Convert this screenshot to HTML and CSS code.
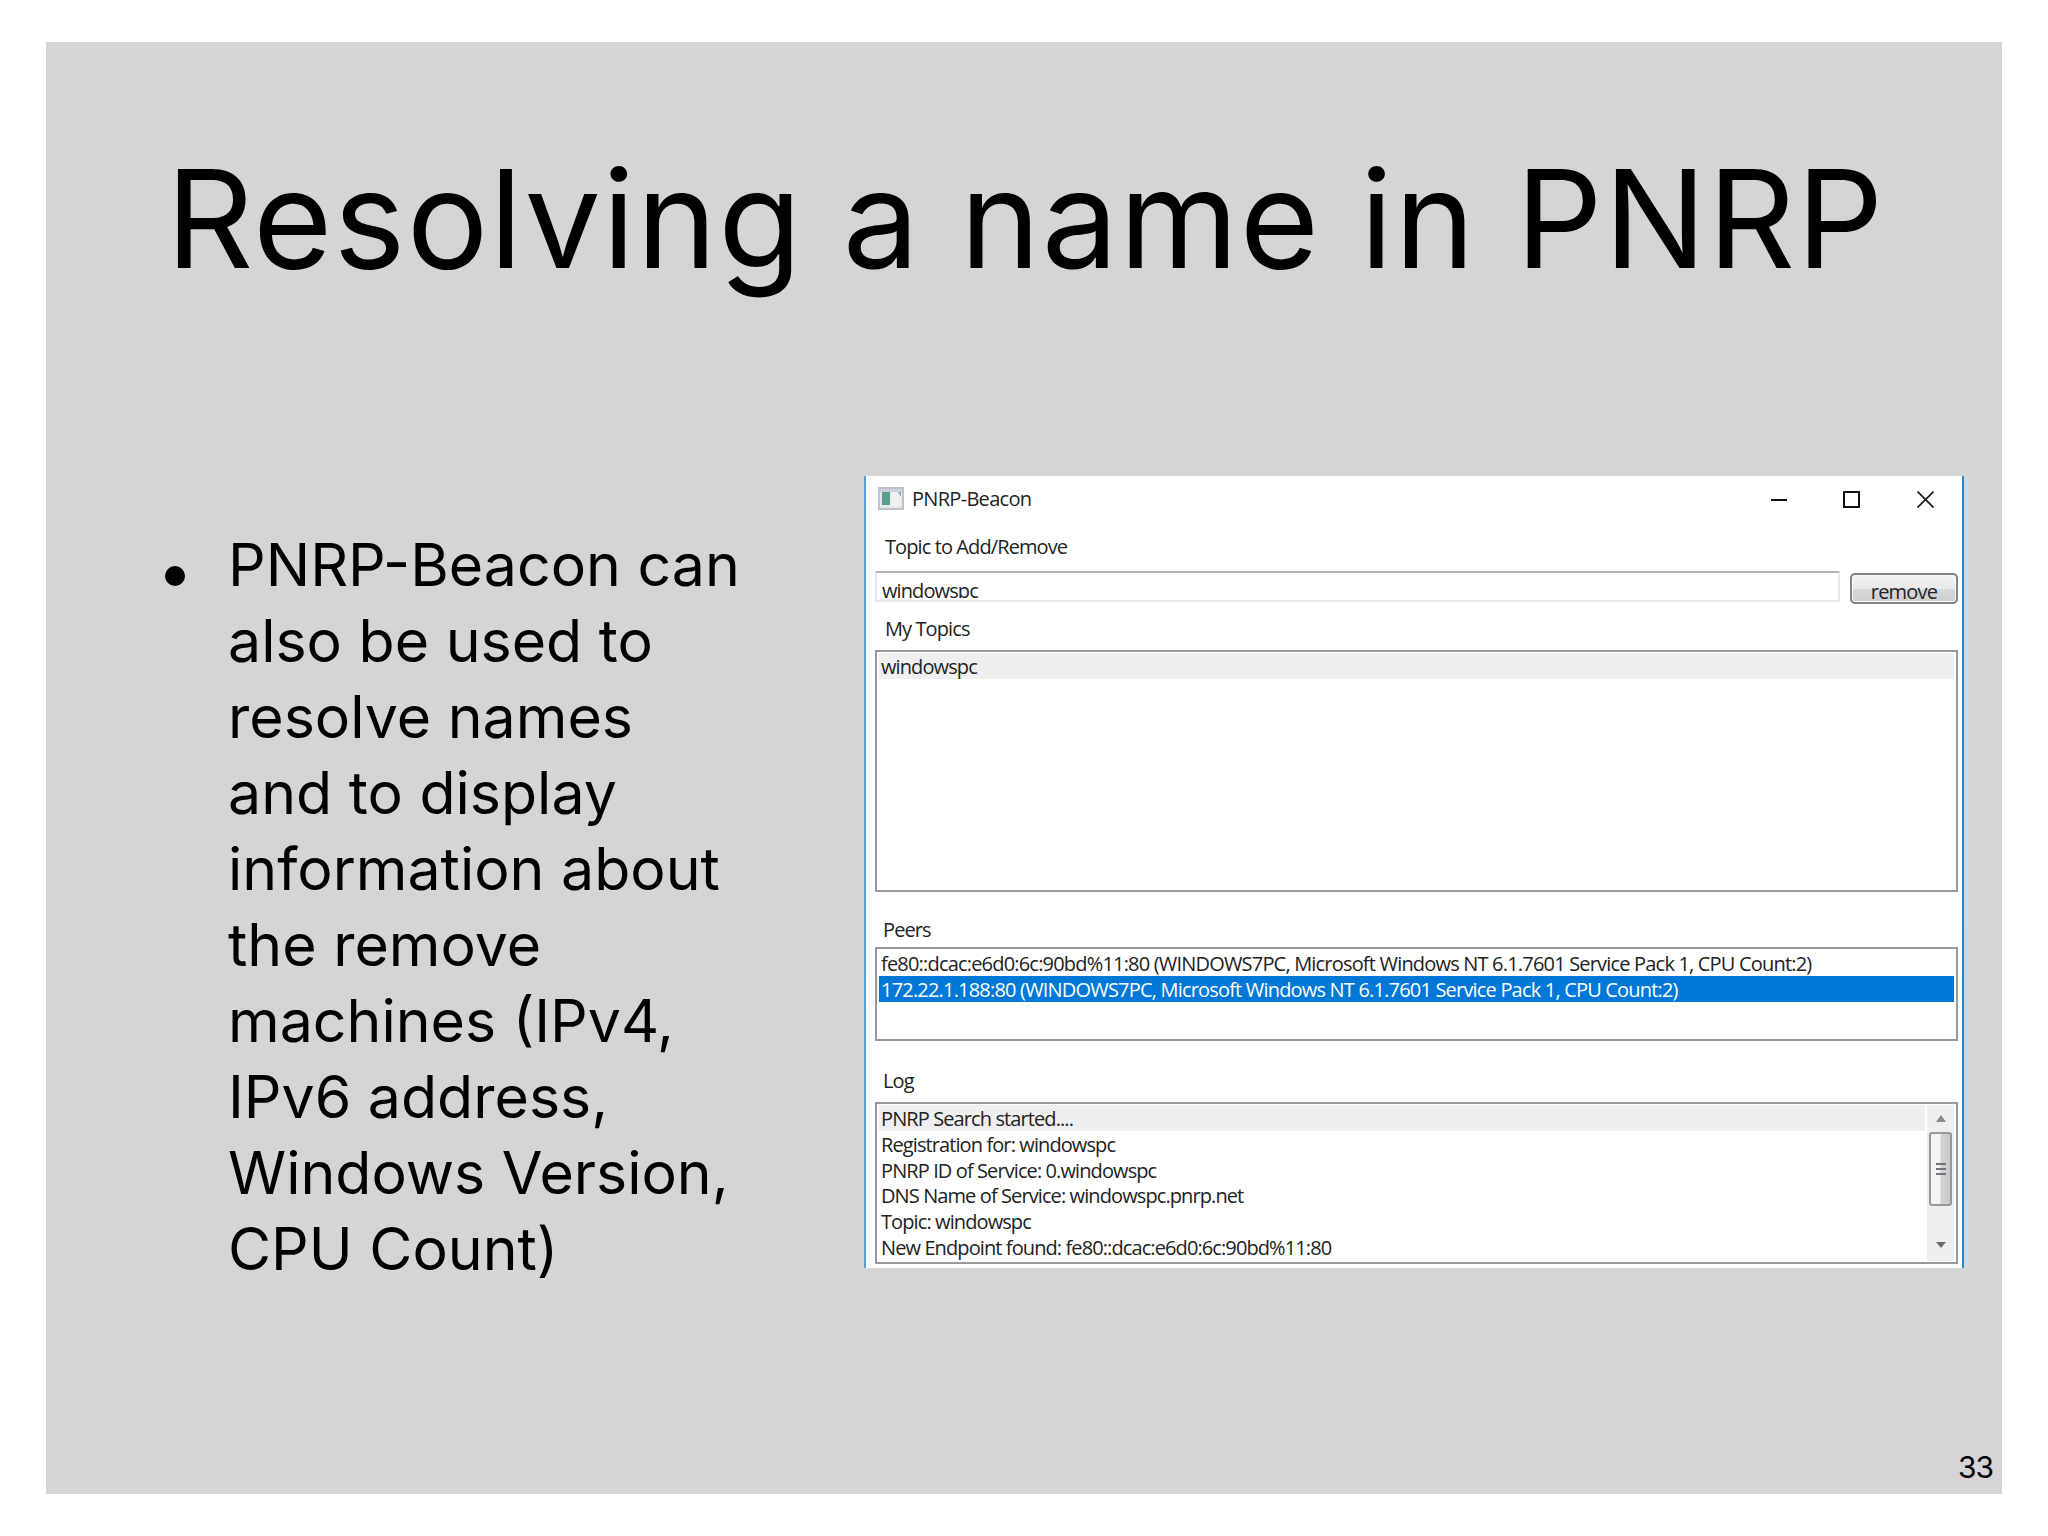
FILE: index.html
```html
<!DOCTYPE html>
<html lang="en">
<head>
    <meta charset="UTF-8">
    <meta name="viewport" content="width=device-width, initial-scale=1.0">
    <title>Resolving a name in PNRP</title>
    <link rel="stylesheet" href="styles.css">
</head>
<body>
    <div class="slide">
        <h1>Resolving a name in PNRP</h1>

        <div class="content">
            <ul class="bullets">
                <li>
                    <span class="dot"></span>
                    <p>PNRP-Beacon can<br>also be used to<br>resolve names<br>and to display<br>information about<br>the remove<br>machines (IPv4,<br>IPv6 address,<br>Windows Version,<br>CPU Count)</p>
                </li>
            </ul>

            <!-- Application window -->
            <div class="window">
                <div class="titlebar">
                    <svg class="app-icon" width="26" height="23" viewBox="0 0 26 23">
                        <rect x="1" y="1" width="24" height="21" fill="#e4e8ee" stroke="#bcc2ca" stroke-width="2"/>
                        <rect x="2" y="2" width="22" height="3" fill="#cdd3dc"/>
                        <rect x="4" y="5" width="8" height="13" fill="#5c9c8e"/>
                        <rect x="13" y="5" width="10" height="14" fill="#eef0f4"/>
                        <path d="M20 5h3v5z" fill="#8fa3bb"/>
                    </svg>
                    <span class="caption">PNRP-Beacon</span>
                    <svg class="controls" width="164" height="18" viewBox="0 0 164 18">
                        <g fill="none" stroke="#111" stroke-width="2">
                            <path d="M1 10h16"/>
                            <rect x="74" y="2" width="15" height="15"/>
                            <path stroke-width="1.7" d="M147.500 1.500l16 16M163.500 1.500l-16 16"/>
                        </g>
                    </svg>
                </div>

                <div class="label topic-label">Topic to Add/Remove</div>
                <div class="topic-row">
                    <div class="topic-input"><span>windowspc</span></div>
                    <button class="remove" type="button">remove</button>
                </div>

                <div class="label my-topics-label">My Topics</div>
                <div class="listbox topics">
                    <div class="row active">windowspc</div>
                </div>

                <div class="label peers-label">Peers</div>
                <div class="listbox peers">
                    <div class="row">fe80::dcac:e6d0:6c:90bd%11:80 (WINDOWS7PC, Microsoft Windows NT 6.1.7601 Service Pack 1, CPU Count:2)</div>
                    <div class="row selected">172.22.1.188:80 (WINDOWS7PC, Microsoft Windows NT 6.1.7601 Service Pack 1, CPU Count:2)</div>
                </div>

                <div class="label log-label">Log</div>
                <div class="listbox log">
                    <div class="log-rows">
                        <div class="row active">PNRP Search started....</div>
                        <div class="row">Registration for: windowspc</div>
                        <div class="row">PNRP ID of Service: 0.windowspc</div>
                        <div class="row">DNS Name of Service: windowspc.pnrp.net</div>
                        <div class="row">Topic: windowspc</div>
                        <div class="row">New Endpoint found: fe80::dcac:e6d0:6c:90bd%11:80</div>
                    </div>
                    <div class="scrollbar">
                        <svg width="10" height="7" viewBox="0 0 10 7"><path d="M5 0l5 7H0z" fill="#8a8a8e"/></svg>
                        <div class="thumb"><i></i><i></i><i></i></div>
                        <svg class="down" width="10" height="6" viewBox="0 0 10 6"><path d="M0 0h10L5 6z" fill="#6c6c70"/></svg>
                    </div>
                </div>
            </div>
        </div>

        <div class="page-number">33</div>
    </div>
</body>
</html>
```
FILE: styles.css
```css
* {
    box-sizing: border-box;
}

body {
    margin: 0;
    padding: 42px 46px;
    width: 2048px;
    height: 1536px;
    background: #fff;
    font-family: Inter, sans-serif;
    color: #000;
    overflow: hidden;
}

.slide {
    display: flex;
    flex-direction: column;
    height: 1452px;
    background: linear-gradient(#d5d5d5 60%, #d6d4d7);
}

h1 {
    margin: 0;
    padding: 94px 0 0 120px;
    height: 434px;
    font-size: 136px;
    font-weight: 400;
    line-height: 166px;
    letter-spacing: 1.35px;
    white-space: nowrap;
}

.content {
    display: flex;
    height: 792px;
}

/* Left column */
.bullets {
    list-style: none;
    margin: 0;
    padding: 51px 0 0 119px;
    width: 818px;
}

.bullets li {
    display: flex;
}

.bullets p {
    margin: 0 0 0 43px;
    font-size: 59px;
    line-height: 76px;
    white-space: nowrap;
}

.dot {
    width: 20px;
    height: 20px;
    margin-top: 39px;
    border-radius: 50%;
    background: #000;
}

/* Window */
.window {
    width: 1100px;
    height: 792px;
    padding: 0 4px 0 9px;
    background: #fff;
    border-left: 2px solid #5a9fdb;
    border-right: 2px solid #2585d6;
    font-family: "Open Sans", "Noto Sans", sans-serif;
    font-size: 20px;
    line-height: 26px;
    letter-spacing: -0.9px;
    color: #222;
}

.titlebar {
    display: flex;
    align-items: center;
    height: 45px;
    padding: 0 24px 0 3px;
}

.caption {
    margin-left: 8px;
    padding-top: 1px;
    letter-spacing: -0.7px;
}

.controls {
    margin-left: auto;
}

.label {
    padding-left: 10px;
    white-space: nowrap;
}

.topic-label {
    height: 50px;
    padding-top: 13px;
}

.topic-row {
    display: flex;
    justify-content: space-between;
    height: 32px;
}

.topic-input {
    width: 965px;
    height: 31px;
    border: 2px solid #e6e6e9;
    border-top-color: #b4b4b6;
    padding: 5px 0 0 5px;
    overflow: hidden;
}

/* the box is too short for the line, descenders get cut */
.topic-input span {
    display: block;
    height: 20px;
    overflow: hidden;
}

.remove {
    width: 108px;
    height: 31px;
    margin-top: 2px;
    padding: 6px 0 0;
    border: 2px solid #838385;
    border-radius: 5px;
    background: linear-gradient(#f2f2f2, #e9e9e9 50%, #d8d8d8 51%, #cfcfcf);
    box-shadow: inset 0 0 0 1px #f8f8f8;
    font: inherit;
    line-height: 22px;
    letter-spacing: -0.8px;
    color: #222;
    overflow: hidden;
}

.my-topics-label {
    height: 47px;
    padding-top: 13px;
}

.listbox {
    border: 2px solid #97999d;
    padding: 1px 2px;
    overflow: hidden;
}

.row {
    height: 25.800px;
    padding-left: 2px;
    line-height: 28px;
    white-space: nowrap;
}

.active {
    background: #efeff1;
}

.selected {
    background: #0078d7;
    color: #fff;
}

.topics {
    height: 242px;
}

.peers-label {
    height: 55px;
    padding: 25px 0 0 8px;
}

.peers {
    height: 94px;
    letter-spacing: -0.81px;
}

.log-label {
    height: 61px;
    padding: 27px 0 0 8px;
}

.log {
    display: flex;
    height: 162px;
}

.log-rows {
    flex: 1;
}

.scrollbar {
    display: flex;
    flex-direction: column;
    align-items: center;
    width: 27px;
    margin-left: 2px;
    padding-top: 10px;
    background: #efeff1;
}

.thumb {
    display: flex;
    flex-direction: column;
    align-items: center;
    justify-content: center;
    gap: 3px;
    width: 23px;
    height: 74px;
    margin-top: 10px;
    border: 2px solid #98989a;
    border-radius: 3px;
    background: linear-gradient(90deg, #f4f4f4 45%, #d2d2d5 55%, #cacace);
}

.thumb i {
    width: 10px;
    height: 2px;
    background: #737377;
}

.down {
    margin-top: 36px;
}

.page-number {
    padding: 181px 9px 0 0;
    font-size: 30px;
    line-height: 36px;
    letter-spacing: -1px;
    text-align: right;
}
```
